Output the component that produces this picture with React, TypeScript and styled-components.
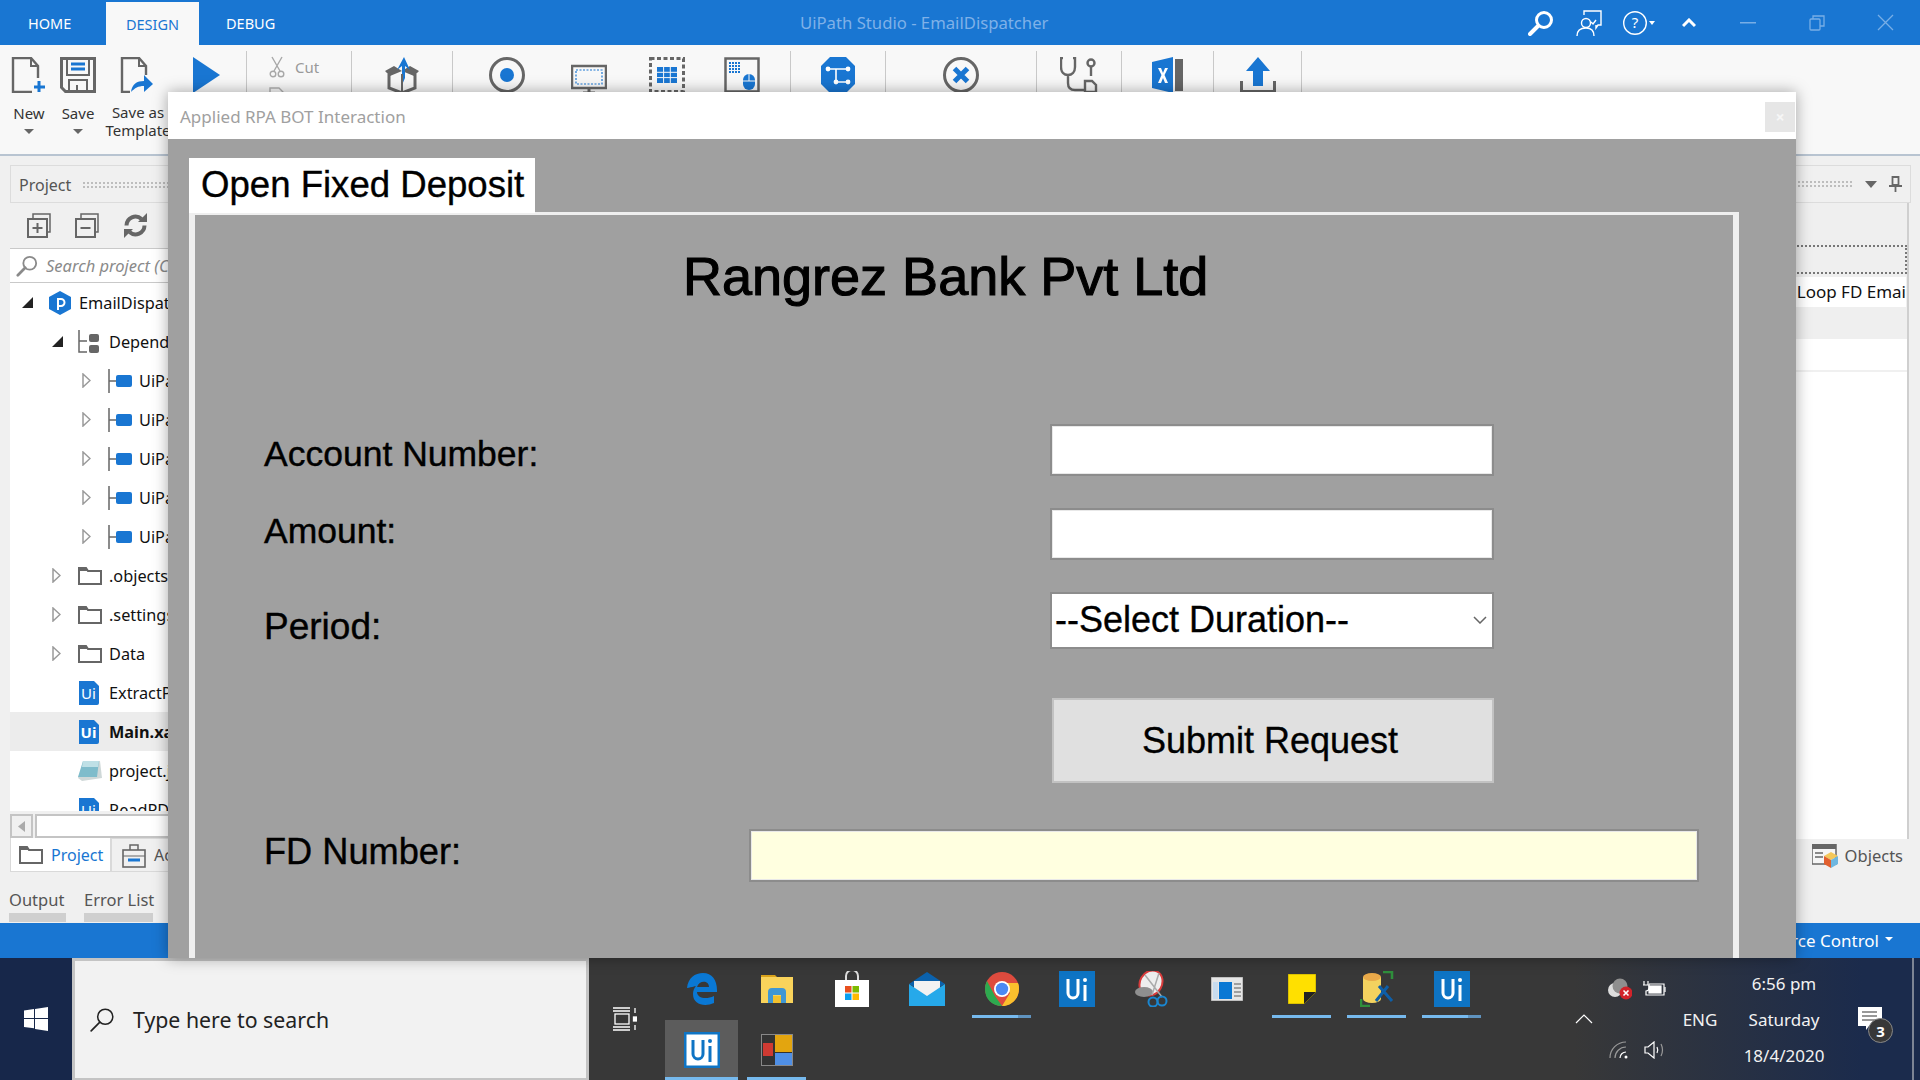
import React from 'react'
import styled, {createGlobalStyle} from 'styled-components'

const BLUE = '#1976d2'
const GREY = '#666666'
const UI_FONT = '"Noto Sans", "Open Sans", sans-serif'

const GlobalStyle = createGlobalStyle`
  html, body { margin: 0; padding: 0; background: #f0f0f0; }
  body { font-family: ${UI_FONT}; overflow: hidden; }
  * { box-sizing: border-box; }
  svg { flex: none; }
`

const Screen = styled.div`
  position: relative;
  width: 1920px;
  height: 1080px;
  overflow: hidden;
  display: flex;
  flex-direction: column;
  background: #f0f0f0;
`

/* ---------- title bar ---------- */
const TopBar = styled.div`
  height: 45px;
  background: ${BLUE};
  display: flex;
  align-items: flex-end;
  position: relative;
`
const MenuTab = styled.div<{$active?: boolean}>`
  height: ${p => (p.$active ? '43px' : '45px')};
  width: ${p => (p.$active ? '93px' : '106px')};
  margin-right: ${p => (p.$active ? '3px' : '0')};
  padding-left: ${p => (p.$active ? '0' : '28px')};
  display: flex;
  align-items: center;
  justify-content: ${p => (p.$active ? 'center' : 'flex-start')};
  font-size: 14.5px;
  color: ${p => (p.$active ? BLUE : '#fff')};
  background: ${p => (p.$active ? '#f8f8f8' : 'transparent')};
`
const DebugTab = styled(MenuTab)`
  padding-left: 24px;
`
const AppTitle = styled.div`
  width: 249px;
  margin-left: 492px;
  height: 45px;
  line-height: 45px;
  font-size: 16.7px;
  white-space: nowrap;
  color: #7fb1e8;
`
const TopIcons = styled.div`
  margin-left: auto;
  height: 45px;
  display: flex;
  align-items: center;
`
const TopIcon = styled.div<{$w: number}>`
  width: ${p => p.$w}px;
  display: flex;
  justify-content: center;
`

/* ---------- ribbon ---------- */
const Ribbon = styled.div`
  height: 111px;
  background: #f8f8f8;
  border-bottom: 2px solid #b8c4d1;
  display: flex;
  padding-top: 6px;
  overflow: hidden;
`
const RibbonButton = styled.div<{$w: number; $pad?: number}>`
  width: ${p => p.$w}px;
  padding-left: ${p => p.$pad ?? 0}px;
  padding-top: 6px;
  display: flex;
  flex-direction: column;
  align-items: ${p => (p.$pad !== undefined ? 'flex-start' : 'center')};
  flex: none;
`
const RibbonLabel = styled.div<{$top?: number}>`
  margin-top: ${p => p.$top ?? 11}px;
  font-size: 15px;
  line-height: 18px;
  color: #333;
  text-align: center;
  white-space: nowrap;
`
const Caret = styled.div`
  margin-top: 7px;
  width: 0;
  height: 0;
  border-left: 5px solid transparent;
  border-right: 5px solid transparent;
  border-top: 5px solid ${GREY};
`
const RibbonSep = styled.div`
  width: 1px;
  height: 100px;
  background: #c9c9c9;
  flex: none;
`
const CutRow = styled.div`
  display: flex;
  align-items: center;
  gap: 10px;
  font-size: 15px;
  color: #9a9a9a;
  margin-top: -1px;
`
const PasteStub = styled.div`
  margin-top: 9px;
  display: flex;
`

/* ---------- workspace ---------- */
const Workspace = styled.div`
  flex: 1;
  display: flex;
  padding-top: 9px;
  min-height: 0;
`
const LeftDock = styled.div`
  width: 200px;
  margin-left: 10px;
  flex: none;
  display: flex;
  flex-direction: column;
`
const DockHeader = styled.div`
  height: 38px;
  border: 1px solid #dcdcdc;
  border-right: 0;
  display: flex;
  align-items: center;
  padding: 2px 0 0 8px;
  gap: 11px;
  font-size: 16px;
  color: #555;
`
const Grip = styled.div<{$w: number}>`
  width: ${p => p.$w}px;
  height: 8px;
  background-image: radial-gradient(#bdbdbd 1px, transparent 1.2px);
  background-size: 4px 4px;
`
const DockTools = styled.div`
  height: 46px;
  display: flex;
  align-items: center;
  gap: 24px;
  padding-left: 17px;
  border-bottom: 1px solid #c9c9c9;
`
const SearchRow = styled.div`
  height: 34px;
  background: #fff;
  border-bottom: 1px solid #c9c9c9;
  display: flex;
  align-items: center;
  padding-left: 6px;
  gap: 8px;
  font-size: 16.5px;
  font-style: italic;
  color: #8a8a8a;
  white-space: nowrap;
  overflow: hidden;
`
const Tree = styled.div`
  height: 528px;
  background: #fff;
  overflow: hidden;
`
const TreeRow = styled.div<{$level: number; $selected?: boolean}>`
  height: 39px;
  display: flex;
  align-items: center;
  padding-left: ${p => 12 + p.$level * 30}px;
  background: ${p => (p.$selected ? '#ececec' : 'transparent')};
  font-size: 16.3px;
  font-weight: ${p => (p.$selected ? 700 : 400)};
  color: #111;
  white-space: nowrap;
`
const Expander = styled.div`
  width: 26px;
  flex: none;
  display: flex;
  justify-content: flex-start;
  padding-left: 0;
`
const TreeIcon = styled.div`
  width: 31px;
  flex: none;
  display: flex;
`
const HScroll = styled.div`
  height: 24px;
  margin-top: 3px;
  display: flex;
  gap: 2px;
`
const ScrollBtn = styled.div`
  width: 23px;
  border: 2px solid #c4c4c4;
  background: #f0f0f0;
  display: flex;
  align-items: center;
  justify-content: center;
`
const ScrollTrack = styled.div`
  flex: 1;
  border: 2px solid #c4c4c4;
  background: #fff;
`
const DockTabs = styled.div`
  height: 34px;
  display: flex;
  font-size: 16px;
`
const DockTab = styled.div<{$active?: boolean}>`
  display: flex;
  align-items: center;
  gap: 8px;
  flex: none;
  padding-left: ${p => (p.$active ? '8px' : '10px')};
  width: ${p => (p.$active ? '101px' : '99px')};
  background: ${p => (p.$active ? '#fff' : 'transparent')};
  border: 1px solid #d9d9d9;
  border-top: ${p => (p.$active ? '0' : '1px solid #d9d9d9')};
  color: ${p => (p.$active ? BLUE : '#555')};
  white-space: nowrap;
`
const OutputTabs = styled.div`
  margin-top: 14px;
  margin-left: -1px;
  display: flex;
  gap: 18px;
`
const OutputTab = styled.div<{$w: number}>`
  width: ${p => p.$w}px;
  font-size: 16.5px;
  line-height: 27px;
  color: #555;
  white-space: nowrap;
  border-bottom: 9px solid #cfcfcf;
`
const RightDock = styled.div`
  margin-left: auto;
  width: 190px;
  padding-right: 11px;
  display: flex;
  flex-direction: column;
  flex: none;
`
const RightHeader = styled.div`
  height: 38px;
  border: 1px solid #dcdcdc;
  border-left: 0;
  margin-right: -2px;
  display: flex;
  align-items: center;
  justify-content: flex-end;
  padding-right: 8px;
  gap: 12px;
`
const RightBody = styled.div`
  border-right: 2px solid #cfcfcf;
  height: 636px;
  display: flex;
  flex-direction: column;
  background: #efefef;
  padding-top: 42px;
`
const DottedBox = styled.div`
  height: 29px;
  border: 2px dotted #777;
  border-left: 0;
`
const LoopRow = styled.div`
  margin-top: 3px;
  height: 30px;
  margin-right: 1px;
  background: #fff;
  text-align: right;
  line-height: 30px;
  font-size: 17px;
  color: #111;
  white-space: nowrap;
  overflow: hidden;
`
const WhiteArea = styled.div`
  margin-top: 32px;
  flex: 1;
  background: #fff;
`
const WhiteRule = styled.div`
  height: 33px;
  border-bottom: 2px solid #f0f0f0;
`
const ObjectsTab = styled.div`
  height: 33px;
  display: flex;
  align-items: center;
  justify-content: flex-end;
  gap: 7px;
  font-size: 16.5px;
  color: #555;
  padding-right: 6px;
`
const StatusBar = styled.div`
  height: 35px;
  background: ${BLUE};
  color: #fff;
  font-size: 17px;
  display: flex;
  align-items: center;
  justify-content: flex-end;
  padding-right: 27px;
  gap: 6px;
  flex: none;
`
const SmallCaret = styled.div`
  width: 0;
  height: 0;
  border-left: 4px solid transparent;
  border-right: 4px solid transparent;
  border-top: 4px solid #fff;
  margin-bottom: 3px;
`

/* ---------- dialog ---------- */
const Dialog = styled.div`
  position: absolute;
  left: 168px;
  top: 92px;
  width: 1628px;
  height: 866px;
  display: flex;
  flex-direction: column;
  background: #a0a0a0;
  box-shadow: 0 0 14px rgba(0, 0, 0, 0.35);
  overflow: hidden;
`
const DialogTitle = styled.div`
  height: 47px;
  background: #fff;
  display: flex;
  align-items: center;
  justify-content: space-between;
  padding: 2px 0 0 12px;
  font-size: 17px;
  color: #a0a0a0;
`
const CloseX = styled.div`
  width: 30px;
  height: 30px;
  margin: 1px 1px 0 0;
  background: #e6e6e6;
  color: #f6f6f6;
  font-size: 16px;
  font-weight: 700;
  display: flex;
  align-items: center;
  justify-content: center;
`
const FormWrap = styled.div`
  flex: 1;
  padding: 19px 57px 0 21px;
  display: flex;
  flex-direction: column;
  font-family: "Liberation Sans", Arial, sans-serif;
  color: #000;
`
const FormTab = styled.div`
  width: 346px;
  height: 55px;
  background: #fff;
  padding-left: 12px;
  font-size: 36.6px;
  line-height: 53px;
  margin-bottom: -1px;
  position: relative;
  z-index: 1;
  white-space: nowrap;
  -webkit-text-stroke: 0.35px #000;
`
const FormFrame = styled.div`
  flex: 1;
  border: 6px solid #efefef;
  border-top-width: 3px;
  border-bottom: 0;
  background: #a0a0a0;
`
const Heading = styled.h1`
  margin: 12px 0 0;
  padding-left: 488px;
  height: 100px;
  font-size: 54px;
  line-height: 98px;
  font-weight: 400;
  -webkit-text-stroke: 1.1px #000;
  white-space: nowrap;
`
const Form = styled.form`
  margin-top: 97px;
  padding-left: 69px;
  display: flex;
  flex-direction: column;
`
const FieldRow = styled.div<{$top: number; $h: number; $labelCol?: number}>`
  margin-top: ${p => p.$top}px;
  height: ${p => p.$h}px;
  display: grid;
  grid-template-columns: ${p => p.$labelCol ?? 786}px 1fr;
`
const FieldLabel = styled.label<{$top: number; $size?: number}>`
  margin-top: ${p => p.$top}px;
  font-size: ${p => p.$size ?? 35.5}px;
  line-height: 44px;
  white-space: nowrap;
  -webkit-text-stroke: 0.4px #000;
`
const TextField = styled.input<{$w?: number; $bg?: string}>`
  display: block;
  width: ${p => p.$w ?? 444}px;
  height: 100%;
  padding: 0 4px;
  background: ${p => p.$bg ?? '#fff'};
  border: 2px solid #8c8c8c;
  outline: 1px solid #e8e8e8;
  outline-offset: -3px;
  border-radius: 0;
`
const SelectWrap = styled.div`
  position: relative;
  width: 444px;
  height: 100%;
`
const DurationSelect = styled.select`
  width: 100%;
  height: 100%;
  padding: 0 0 3px 3px;
  appearance: none;
  border: 2px solid #8c8c8c;
  border-radius: 0;
  background: #fff;
  color: #000;
  font-family: "Liberation Sans", Arial, sans-serif;
  font-size: 36px;
  -webkit-text-stroke: 0.35px #000;
`
const SelectChevron = styled.svg`
  position: absolute;
  right: 7px;
  top: 24px;
`
const SubmitButton = styled.button`
  display: block;
  width: 442px;
  height: 100%;
  margin-left: 2px;
  background: #e0e0e0;
  border: 2px solid #c2c2c2;
  color: #000;
  font-family: "Liberation Sans", Arial, sans-serif;
  font-size: 36px;
  padding: 0 6px 0 0;
  -webkit-text-stroke: 0.35px #000;
`

/* ---------- taskbar ---------- */
const Taskbar = styled.div`
  height: 122px;
  flex: none;
  display: flex;
  background: linear-gradient(90deg, #383838 0%, #383838 82%, #1b2b4c 97%);
`
const StartButton = styled.div`
  width: 72px;
  background: #17274a;
  display: flex;
  align-items: center;
  justify-content: center;
  flex: none;
`
const SearchBox = styled.div`
  width: 517px;
  flex: none;
  background: #f2f2f2;
  border: 3px solid #c4c4c4;
  border-bottom-width: 2px;
  display: flex;
  align-items: center;
  padding-left: 14px;
  gap: 18px;
  font-size: 21.3px;
  color: #222;
`
const TaskView = styled.div`
  width: 75px;
  flex: none;
  padding-right: 4px;
  display: flex;
  align-items: center;
  justify-content: center;
`
const TaskGrid = styled.div`
  width: 825px;
  flex: none;
  display: grid;
  grid-template-columns: repeat(11, 75px);
  grid-template-rows: 62px 60px;
`
const TaskItem = styled.div<{$active?: boolean}>`
  position: relative;
  display: flex;
  align-items: center;
  justify-content: center;
  background: ${p => (p.$active ? '#5c5c5c' : 'transparent')};
  margin: 0 1px;
  height: 100%;
`
const RunningBar = styled.div<{$split?: boolean; $bottom: number}>`
  position: absolute;
  left: 7px;
  right: 7px;
  bottom: ${p => p.$bottom}px;
  height: 3px;
  background: ${p =>
    p.$split
      ? 'linear-gradient(90deg, #76b9ed 0 78%, #5f93bf 78% 100%)'
      : '#76b9ed'};
`
const ActiveBar = styled(RunningBar)`
  left: 0;
  right: 0;
`
const Tray = styled.div`
  flex: 1;
  display: flex;
  color: #fff;
  position: relative;
`
const TrayChevron = styled.div`
  width: 29px;
  margin-left: 86px;
  display: flex;
  align-items: center;
  justify-content: flex-start;
`
const TrayIcons = styled.div`
  width: 66px;
  display: grid;
  grid-template-columns: 30px 30px;
  grid-template-rows: 61px 61px;
  place-items: center;
  gap: 0 6px;
`
const TrayLang = styled.div`
  width: 60px;
  font-size: 17px;
  display: flex;
  align-items: center;
  justify-content: center;
  color: #f2f2f2;
`
const Clock = styled.div`
  width: 108px;
  padding: 9px 0 7px;
  display: flex;
  flex-direction: column;
  justify-content: space-between;
  align-items: center;
  font-size: 17px;
  line-height: 34px;
  white-space: nowrap;
  color: #f2f2f2;
`
const Notify = styled.div`
  width: 40px;
  margin-left: 12px;
  display: flex;
  align-items: center;
  justify-content: center;
  position: relative;
`
const Badge = styled.div`
  position: absolute;
  left: 18px;
  top: 60px;
  width: 25px;
  height: 25px;
  border-radius: 50%;
  border: 1px solid #888;
  background: #383838;
  color: #fff;
  font-size: 15px;
  font-weight: 700;
  display: flex;
  align-items: center;
  justify-content: center;
`
const ShowDesktop = styled.div`
  position: absolute;
  right: 6px;
  top: 0;
  bottom: 0;
  width: 2px;
  background: #7d8594;
`

/* ---------- icons ---------- */
const NewIcon = () => (
  <svg width="36" height="36" viewBox="0 0 36 36" fill="none">
    <path d="M27 21V9l-7-8H2v34h19" stroke={GREY} strokeWidth="2.4" />
    <path d="M20 1v8h7" stroke={GREY} strokeWidth="2" />
    <path d="M28 24v11M23 30h11" stroke={BLUE} strokeWidth="3" />
  </svg>
)
const SaveIcon = () => (
  <svg width="36" height="36" viewBox="0 0 36 36" fill="none">
    <path d="M1.500 1.500h33v33h-29l-4-4z" stroke={GREY} strokeWidth="3" />
    <path d="M7 2v16h22V2" stroke={GREY} strokeWidth="2" />
    <path d="M11 7h14M11 12h14" stroke={BLUE} strokeWidth="3" />
    <path d="M9 35V23h18v12M17 35v-7" stroke={GREY} strokeWidth="2" />
  </svg>
)
const SaveAsIcon = () => (
  <svg width="36" height="36" viewBox="0 0 36 36" fill="none">
    <path d="M10 35H2V1h17l7 8v9" stroke={GREY} strokeWidth="2.400" />
    <path d="M19 1v8h7" stroke={GREY} strokeWidth="2" />
    <path d="M11 35c1-8 6-11 13-11v-6l9 9-9 8v-6c-6 0-9 2-13 6z" fill={BLUE} />
  </svg>
)
const PlayIcon = () => (
  <svg width="28" height="36" viewBox="0 0 28 36"><path d="M0 0l27 18L0 36z" fill={BLUE} /></svg>
)
const ScissorsIcon = () => (
  <svg width="16" height="22" viewBox="0 0 16 22" fill="none" stroke="#a8a8a8" strokeWidth="1.400">
    <path d="M3 1l8 14M13 1L5 15" />
    <circle cx="4" cy="18" r="2.800" />
    <circle cx="12" cy="18" r="2.800" />
  </svg>
)
const PasteIcon = () => (
  <svg width="16" height="10" viewBox="0 0 16 10" fill="none" stroke="#b0b0b0" strokeWidth="1.400">
    <path d="M1 10V1h9l4 4v5" />
  </svg>
)
const PublishBoxIcon = () => (
  <svg width="36" height="36" viewBox="0 0 36 36" fill="none">
    <path d="M5 17v14l13 5 13-5V17" stroke={GREY} strokeWidth="3" />
    <path d="M1 14l9-5 8 5 8-5 9 5-5 5-12-5-12 5z" fill={GREY} />
    <path d="M18 28V9l-5 4 7-13 6 13-5-4v12z" fill={BLUE} />
    <path d="M18 17v19" stroke={GREY} strokeWidth="2" />
  </svg>
)
const RecordIcon = () => (
  <svg width="36" height="36" viewBox="0 0 36 36" fill="none">
    <circle cx="18" cy="18" r="16.500" stroke={GREY} strokeWidth="3" />
    <circle cx="18" cy="18" r="7" fill={BLUE} />
  </svg>
)
const ScreenIcon = () => (
  <svg width="36" height="36" viewBox="0 0 36 36" fill="none">
    <rect x="1" y="9" width="34" height="22" stroke={GREY} strokeWidth="2.500" />
    <rect x="5" y="13" width="26" height="14" stroke={BLUE} strokeWidth="1.200" strokeDasharray="2 1.500" />
    <path d="M18 31v4M12 36h12" stroke={GREY} strokeWidth="3" />
  </svg>
)
const TableIcon = () => (
  <svg width="36" height="36" viewBox="0 0 36 36" fill="none">
    <rect x="1.500" y="1.500" width="33" height="33" stroke={GREY} strokeWidth="3" strokeDasharray="4 2.500" />
    <rect x="8" y="10" width="20" height="16" fill={BLUE} />
    <path d="M8 15.300h20M8 20.600h20M14.600 10v16M21.300 10v16" stroke="#f8f8f8" strokeWidth="1" />
  </svg>
)
const MouseGridIcon = () => (
  <svg width="36" height="36" viewBox="0 0 36 36" fill="none">
    <rect x="1.500" y="1.500" width="33" height="33" stroke={GREY} strokeWidth="2.500" />
    <path d="M5 6h12M5 9h12M5 12h12M5 15h12" stroke={BLUE} strokeWidth="2" strokeDasharray="2 1" />
    <rect x="19" y="17" width="12" height="16" rx="6" fill={BLUE} />
    <path d="M19 24h12M25 17v7" stroke="#f8f8f8" strokeWidth="1" />
  </svg>
)
const HexFlowIcon = () => (
  <svg width="34" height="36" viewBox="0 0 34 36" fill="none">
    <path d="M9 0h16l9 9v18l-9 9H9l-9-9V9z" fill={BLUE} />
    <path d="M7 12h20M15 12v13h12" stroke="#fff" strokeWidth="1.600" />
    <circle cx="7" cy="12" r="2.400" fill="#fff" /><circle cx="27" cy="12" r="2.400" fill="#fff" />
    <circle cx="15" cy="25" r="2.400" fill="#fff" /><circle cx="27" cy="25" r="2.400" fill="#fff" />
  </svg>
)
const StopIcon = () => (
  <svg width="36" height="36" viewBox="0 0 36 36" fill="none">
    <circle cx="18" cy="18" r="16.500" stroke={GREY} strokeWidth="3" />
    <path d="M11.500 11.500l13 13M24.500 11.500l-13 13" stroke={BLUE} strokeWidth="5" />
  </svg>
)
const StethoscopeIcon = () => (
  <svg width="38" height="36" viewBox="0 0 38 36" fill="none" stroke={GREY} strokeWidth="2.400">
    <path d="M3 1H1v9c0 5 3 8 7 8s7-3 7-8V1h-2M8 18v8c0 5 3 7 7 7h9" />
    <circle cx="31" cy="6" r="3.500" />
    <path d="M31 10v9" />
    <path d="M25 35V24h7l4 4v7z" />
  </svg>
)
const ExcelIcon = () => (
  <svg width="32" height="36" viewBox="0 0 32 36">
    <path d="M0 5l21-5v36L0 31z" fill={BLUE} />
    <rect x="23" y="2" width="8" height="32" fill={GREY} />
    <path d="M6 11h3l2 5 2-5h3l-3.500 7 3.500 8h-3l-2-5-2 5H6l3.500-8z" fill="#fff" />
  </svg>
)
const UploadIcon = () => (
  <svg width="36" height="36" viewBox="0 0 36 36" fill="none">
    <path d="M18 0l12 14h-7v15H13V14H6z" fill={BLUE} />
    <path d="M1.500 24v10.500h33V24" stroke={GREY} strokeWidth="3" />
  </svg>
)
const MagnifierIcon = () => (
  <svg width="26" height="26" viewBox="0 0 26 26" fill="none" stroke="#fff">
    <circle cx="16" cy="10" r="7.500" strokeWidth="3" />
    <path d="M10 16l-8 8" strokeWidth="4" strokeLinecap="round" />
  </svg>
)
const FeedbackIcon = () => (
  <svg width="26" height="26" viewBox="0 0 26 26" fill="none" stroke="#fff" strokeWidth="1.400">
    <path d="M8 5V1h17v14h-3l-2 3v-3" />
    <circle cx="10" cy="13" r="4.500" />
    <path d="M1 26c0-6 4-8 9-8s8 2 8 8M15 12l2 2 3-4" />
  </svg>
)
const HelpIcon = () => (
  <svg width="32" height="26" viewBox="0 0 32 26" fill="none">
    <circle cx="12" cy="13" r="11.300" stroke="#fff" strokeWidth="1.400" />
    <text x="12" y="18" textAnchor="middle" fill="#fff" fontSize="15" fontFamily="Noto Sans, sans-serif">?</text>
    <path d="M26 11h6l-3 4z" fill="#fff" />
  </svg>
)
const ChevronUpIcon = () => (
  <svg width="14" height="10" viewBox="0 0 14 10" fill="none" stroke="#fff" strokeWidth="3"><path d="M1 8l6-6 6 6" /></svg>
)
const MinimizeIcon = () => (
  <svg width="16" height="4" viewBox="0 0 16 4"><rect y="1" width="16" height="1.500" fill="#78aee6" /></svg>
)
const RestoreIcon = () => (
  <svg width="16" height="16" viewBox="0 0 16 16" fill="none" stroke="#78aee6" strokeWidth="1.300">
    <rect x="1" y="4" width="10" height="11" rx="1" />
    <path d="M4 4V1h11v10h-4" />
  </svg>
)
const CloseIcon = () => (
  <svg width="17" height="17" viewBox="0 0 17 17" fill="none" stroke="#78aee6" strokeWidth="1.300"><path d="M1 1l15 15M16 1L1 16" /></svg>
)
const ExpandAllIcon = () => (
  <svg width="24" height="25" viewBox="0 0 24 25" fill="none" stroke={GREY} strokeWidth="2">
    <path d="M6 5V1h17v18h-3" strokeWidth="1.500" />
    <rect x="1" y="6" width="19" height="18" />
    <path d="M10.500 10v10M5.500 15h10" />
  </svg>
)
const CollapseAllIcon = () => (
  <svg width="24" height="25" viewBox="0 0 24 25" fill="none" stroke={GREY} strokeWidth="2">
    <path d="M6 5V1h17v18h-3" strokeWidth="1.500" />
    <rect x="1" y="6" width="19" height="18" />
    <path d="M5.500 15h10" />
  </svg>
)
const RefreshIcon = () => (
  <svg width="25" height="25" viewBox="0 0 25 25" fill="none" stroke={GREY} strokeWidth="4">
    <path d="M3.500 12.500a9 9 0 0 1 15-6.500M21.500 12.500a9 9 0 0 1-15 6.500" />
    <path d="M15 9h9V0z" fill={GREY} stroke="none" />
    <path d="M10 16H1v9z" fill={GREY} stroke="none" />
  </svg>
)
const SearchGlass = ({color, size, line = 2, handle = 3}: {color: string; size: number; line?: number; handle?: number}) => (
  <svg width={size} height={size} viewBox="0 0 24 24" fill="none" stroke={color}>
    <circle cx="15" cy="9" r="7" strokeWidth={line} />
    <path d="M10 14l-8 8" strokeWidth={handle} strokeLinecap="round" />
  </svg>
)
const TriangleDown = () => (
  <svg width="11" height="11" viewBox="0 0 11 11"><path d="M0 11L11 0v11z" fill="#222" /></svg>
)
const TriangleRight = () => (
  <svg width="9" height="15" viewBox="0 0 9 15" fill="none"><path d="M1 1l7 6.500L1 14z" stroke="#9a9a9a" strokeWidth="1.500" /></svg>
)
const ProjectHexIcon = () => (
  <svg width="24" height="24" viewBox="0 0 24 24">
    <path d="M12 0l11 6v12l-11 6-11-6V6z" fill={BLUE} />
    <path d="M10 19V8h3a3.500 3.500 0 0 1 0 7h-3" fill="none" stroke="#fff" strokeWidth="2" />
  </svg>
)
const DepsIcon = () => (
  <svg width="22" height="24" viewBox="0 0 22 24" fill="none">
    <path d="M1 0v22h8M1 11h8" stroke={GREY} strokeWidth="1.500" />
    <rect x="11" y="4" width="10" height="8" rx="2" fill={GREY} />
    <rect x="11" y="15" width="10" height="8" rx="2" fill={GREY} />
  </svg>
)
const PackageIcon = () => (
  <svg width="24" height="24" viewBox="0 0 24 24" fill="none">
    <path d="M1 0v24M1 12h7" stroke={GREY} strokeWidth="1.500" />
    <rect x="8" y="6" width="16" height="12" rx="2" fill={BLUE} />
  </svg>
)
const FolderIcon = ({size = 24}: {size?: number}) => (
  <svg width={size} height={size * 0.75} viewBox="0 0 24 18" fill="none">
    <path d="M1 17V1h7l2 3h13v13z" stroke={GREY} strokeWidth="2" />
    <path d="M1 1h7l2 3H1z" fill={GREY} />
  </svg>
)
const UiFileIcon = () => (
  <svg width="21" height="24" viewBox="0 0 21 24">
    <path d="M1 0h15l5 5v17a2 2 0 0 1-2 2H1z" fill={BLUE} />
    <text x="10.500" y="18" textAnchor="middle" fill="#fff" fontSize="15" fontFamily="Noto Sans, sans-serif">Ui</text>
  </svg>
)
const JsonFileIcon = () => (
  <svg width="24" height="22" viewBox="0 0 24 22">
    <path d="M6 1h16l2 17-20 3-4-3z" fill="#cfd8d8" />
    <path d="M5 1h16l-2 16H0z" fill="#7fbccb" />
    <path d="M5 1h16l-1 6H4z" fill="#bfe0e6" />
  </svg>
)
const ToolboxIcon = () => (
  <svg width="24" height="25" viewBox="0 0 24 25" fill="none">
    <path d="M8 7V2h8v5" stroke={GREY} strokeWidth="1.500" />
    <rect x="1" y="7" width="22" height="17" stroke={GREY} strokeWidth="1.600" />
    <path d="M1 13h22" stroke={GREY} strokeWidth="1" />
    <path d="M6 17h12" stroke={BLUE} strokeWidth="3" />
  </svg>
)
const ObjectsIcon = () => (
  <svg width="26" height="24" viewBox="0 0 26 24">
    <rect x="0" y="0" width="24" height="20" fill="#f5f5f5" stroke={GREY} strokeWidth="1.500" />
    <rect x="0" y="0" width="24" height="5" fill={GREY} />
    <path d="M3 9h8M3 13h8" stroke={GREY} strokeWidth="1.500" />
    <path d="M19 8l7 4-7 4-7-4z" fill="#f4c85a" />
    <path d="M12 12l7 4v8l-7-4z" fill="#e2602f" />
    <path d="M26 12l-7 4v8l7-4z" fill="#6fb7e0" />
  </svg>
)
const PinIcon = () => (
  <svg width="13" height="16" viewBox="0 0 13 16" fill="none" stroke={GREY} strokeWidth="1.800">
    <path d="M3.500 1h6v8h-6zM0 10h13M6.500 10v6" />
  </svg>
)
const DropTriangle = () => (
  <svg width="12" height="7" viewBox="0 0 12 7"><path d="M0 0h12L6 7z" fill={GREY} /></svg>
)
const WindowsLogo = () => (
  <svg width="24" height="24" viewBox="0 0 24 24" fill="#fff">
    <path d="M0 3.500l10-1.400V11H0zM11 2l13-2v11H11zM0 12h10v9.200L0 20zM11 12h13v12l-13-1.900z" />
  </svg>
)
const TaskViewIcon = () => (
  <svg width="24" height="24" viewBox="0 0 24 24" fill="none" stroke="#fff" strokeWidth="1.300">
    <path d="M0 1h17M0 4h17M0 20h17M0 23h17M22 1v5M22 18v5" />
    <rect x="2" y="7" width="14" height="10" />
    <rect x="20.500" y="10" width="3" height="4" fill="#fff" />
  </svg>
)
const EdgeIcon = () => (
  <svg width="32" height="32" viewBox="0 0 32 32">
    <path d="M1 15C2 5 9 0 17 0c9 0 14 7 14 17v2H11c0 6 9 8 17 4v7c-9 4-21 2-21-9 0-3 1-6 3-8 0 0-4 1-9 2zm10-1h12c0-7-10-7-12 0z" fill="#0a78d4" />
  </svg>
)
const ExplorerIcon = () => (
  <svg width="32" height="30" viewBox="0 0 32 30">
    <path d="M0 1h14l3 3H0z" fill="#d9a21b" />
    <rect y="3" width="32" height="26" fill="#f9d35b" />
    <path d="M7 29V18a4 4 0 0 1 4-4h10a4 4 0 0 1 4 4v11h-5v-8h-8v8z" fill="#3f97d4" />
    <rect x="12" y="22" width="8" height="7" fill="#f2c12e" />
  </svg>
)
const StoreIcon = () => (
  <svg width="34" height="36" viewBox="0 0 34 36">
    <path d="M11 10V5a6 6 0 0 1 12 0v5" fill="none" stroke="#ddd" strokeWidth="2" />
    <rect y="9" width="34" height="27" fill="#fff" />
    <rect x="10" y="15" width="6.500" height="6.500" fill="#e8501f" />
    <rect x="17.500" y="15" width="6.500" height="6.500" fill="#7dba00" />
    <rect x="10" y="22.500" width="6.500" height="6.500" fill="#0a9ff0" />
    <rect x="17.500" y="22.500" width="6.500" height="6.500" fill="#ffb900" />
  </svg>
)
const MailIcon = () => (
  <svg width="36" height="34" viewBox="0 0 36 34">
    <path d="M18 0l18 12-18 10L0 12z" fill="#0b62ad" />
    <path d="M5 9h26v10l-13 7-13-7z" fill="#f2f2f2" />
    <path d="M0 12l18 12 18-12v22H0z" fill="#26a9ea" />
  </svg>
)
const ChromeIcon = () => (
  <svg width="34" height="34" viewBox="0 0 34 34">
    <circle cx="17" cy="17" r="17" fill="#dd4b3e" />
    <path d="M2 9l8 15 7 10C7 34 0 27 0 17c0-3 .7-5.700 2-8z" fill="#2da94f" />
    <path d="M17 11h16c1 2 1 4 1 6 0 10-8 17-17 17l8-13z" fill="#fbc02d" />
    <circle cx="17" cy="17" r="8" fill="#fff" />
    <circle cx="17" cy="17" r="6.200" fill="#4a89f3" />
  </svg>
)
const UiSquare = ({size = 36}: {size?: number}) => (
  <svg width={size} height={size} viewBox="0 0 36 36">
    <rect width="36" height="36" fill="#0e74c4" />
    <path d="M9 8v14a5 5 0 0 0 10 0V8M26 14v16" fill="none" stroke="#fff" strokeWidth="3" />
    <circle cx="26" cy="9" r="2" fill="#fff" />
  </svg>
)
const UiFramed = () => (
  <svg width="36" height="36" viewBox="0 0 36 36">
    <rect width="36" height="36" fill="#0e74c4" />
    <rect x="2.500" y="2.500" width="31" height="31" fill="#fff" />
    <path d="M9 8v14a5 5 0 0 0 10 0V8M26 14v16" fill="none" stroke="#0e74c4" strokeWidth="3" />
    <circle cx="26" cy="9" r="2" fill="#0e74c4" />
  </svg>
)
const SnipIcon = () => (
  <svg width="34" height="36" viewBox="0 0 34 36" fill="none">
    <ellipse cx="16" cy="12" rx="11" ry="13" transform="rotate(30 16 12)" fill="#eee" stroke="#d83b3b" strokeWidth="2" />
    <ellipse cx="9" cy="21" rx="9" ry="5" fill="#8f8f8f" />
    <path d="M10 4l17 22M24 2l-7 22" stroke="#aaa" strokeWidth="1.500" />
    <circle cx="27" cy="30" r="4.500" stroke="#1a86d0" strokeWidth="2" />
    <circle cx="18" cy="31" r="4.500" stroke="#1a86d0" strokeWidth="2" />
  </svg>
)
const PanelAppIcon = () => (
  <svg width="32" height="24" viewBox="0 0 32 24">
    <rect width="32" height="24" fill="#e6e6e6" stroke="#999" />
    <rect x="2" y="5" width="5" height="17" fill="#c9dcee" />
    <rect x="8" y="5" width="13" height="17" fill="#0a78d4" />
    <path d="M23 7h7M23 11h7M23 15h7M23 19h7" stroke="#888" strokeWidth="1.500" />
  </svg>
)
const StickyIcon = () => (
  <svg width="28" height="30" viewBox="0 0 28 30">
    <path d="M0 0h28v18L16 30H0z" fill="#ffe000" stroke="#b9a300" strokeWidth="1" />
    <path d="M16 30V18h12z" fill="#222" />
  </svg>
)
const DbToolIcon = () => (
  <svg width="34" height="36" viewBox="0 0 34 36" fill="none">
    <path d="M3 6v22a9 4 0 0 0 18 0V6" fill="#f3d25f" />
    <ellipse cx="12" cy="6" rx="9" ry="4" fill="#e9a949" />
    <path d="M23 1h9v7M1 28v7h9" stroke="#2f8f3c" strokeWidth="2.500" />
    <path d="M16 30l12-15M32 30L19 15" stroke="#0e5fa8" strokeWidth="3" />
  </svg>
)
const LayoutAppIcon = () => (
  <svg width="32" height="32" viewBox="0 0 32 32">
    <rect x="0.500" y="0.500" width="31" height="31" fill="#333" stroke="#888" />
    <rect x="14" y="1" width="17" height="17" fill="#e3a50f" />
    <rect x="14" y="19" width="17" height="12" fill="#4f8fe6" />
    <rect x="2" y="9" width="10" height="13" fill="#cf3a32" />
  </svg>
)
const CloudErrorIcon = () => (
  <svg width="26" height="22" viewBox="0 0 26 22">
    <circle cx="9" cy="12" r="7" fill="#ddd" />
    <circle cx="14" cy="8" r="7.500" fill="#8f8f8f" />
    <circle cx="20" cy="15" r="6.500" fill="#d2232a" />
    <path d="M17.500 12.500l5 5M22.500 12.500l-5 5" stroke="#fff" strokeWidth="1.600" />
  </svg>
)
const BatteryIcon = () => (
  <svg width="24" height="18" viewBox="0 0 24 18" fill="none" stroke="#fff" strokeWidth="1.200">
    <path d="M1 1v4M5 1v4M0 5h6v3a3 3 0 0 1-3 3v4h18v-11H6" />
    <rect x="6" y="6" width="12" height="7" fill="#fff" />
    <path d="M22 7v5" />
  </svg>
)
const TrayUpIcon = () => (
  <svg width="18" height="10" viewBox="0 0 18 10" fill="none" stroke="#fff" strokeWidth="1.200"><path d="M1 9l8-8 8 8" /></svg>
)
const WifiIcon = () => (
  <svg width="20" height="18" viewBox="0 0 20 18" fill="none" stroke="#9a9a9a" strokeWidth="1.200">
    <path d="M1 17A16 16 0 0 1 17 1M6 17A11 11 0 0 1 17 6" />
    <path d="M11 17a6 6 0 0 1 6-6" stroke="#fff" />
    <circle cx="17" cy="16" r="1.500" fill="#fff" stroke="none" />
  </svg>
)
const SpeakerIcon = () => (
  <svg width="22" height="18" viewBox="0 0 22 18" fill="none" stroke="#fff" strokeWidth="1.200">
    <path d="M1 6h3l6-5v16l-6-5H1z" />
    <path d="M13 6c1 2 1 4 0 6" />
    <path d="M17 3c2 4 2 8 0 12" stroke="#999" />
  </svg>
)
const NotifyIcon = () => (
  <svg width="24" height="24" viewBox="0 0 24 24">
    <path d="M0 0h24v19H11l-3 4v-4H0z" fill="#fff" />
    <path d="M4 5h15M4 9h15M4 13h15" stroke="#333" strokeWidth="1.200" />
  </svg>
)

const treeRows = [
  {level: 0, label: 'EmailDispatcher', open: true, icon: <ProjectHexIcon />},
  {level: 1, label: 'Dependencies', open: true, icon: <DepsIcon />},
  {level: 2, label: 'UiPath.Excel', closed: true, icon: <PackageIcon />},
  {level: 2, label: 'UiPath.Mail', closed: true, icon: <PackageIcon />},
  {level: 2, label: 'UiPath.PDF', closed: true, icon: <PackageIcon />},
  {level: 2, label: 'UiPath.System', closed: true, icon: <PackageIcon />},
  {level: 2, label: 'UiPath.UIAuto', closed: true, icon: <PackageIcon />},
  {level: 1, label: '.objects', closed: true, icon: <FolderIcon />},
  {level: 1, label: '.settings', closed: true, icon: <FolderIcon />},
  {level: 1, label: 'Data', closed: true, icon: <FolderIcon />},
  {level: 1, label: 'ExtractPDF.xaml', icon: <UiFileIcon />},
  {level: 1, label: 'Main.xaml', selected: true, icon: <UiFileIcon />},
  {level: 1, label: 'project.json', icon: <JsonFileIcon />},
  {level: 1, label: 'ReadPDF.xaml', icon: <UiFileIcon />},
]

const taskIcons: {icon: React.ReactNode; bar?: boolean; split?: boolean}[] = [
  {icon: <EdgeIcon />},
  {icon: <ExplorerIcon />},
  {icon: <StoreIcon />},
  {icon: <MailIcon />},
  {icon: <ChromeIcon />, bar: true, split: true},
  {icon: <UiSquare />},
  {icon: <SnipIcon />},
  {icon: <PanelAppIcon />},
  {icon: <StickyIcon />, bar: true},
  {icon: <DbToolIcon />, bar: true},
  {icon: <UiSquare />, bar: true, split: true},
]

function App() {
  return (
    <Screen>
      <GlobalStyle />
      <TopBar>
        <MenuTab>HOME</MenuTab>
        <MenuTab $active>DESIGN</MenuTab>
        <DebugTab>DEBUG</DebugTab>
        <AppTitle>UiPath Studio - EmailDispatcher</AppTitle>
        <TopIcons>
          <TopIcon $w={46}><MagnifierIcon /></TopIcon>
          <TopIcon $w={50}><FeedbackIcon /></TopIcon>
          <TopIcon $w={50}><HelpIcon /></TopIcon>
          <TopIcon $w={50}><ChevronUpIcon /></TopIcon>
          <TopIcon $w={68}><MinimizeIcon /></TopIcon>
          <TopIcon $w={69}><RestoreIcon /></TopIcon>
          <TopIcon $w={69}><CloseIcon /></TopIcon>
        </TopIcons>
      </TopBar>

      <Ribbon>
        <RibbonButton $w={58}>
          <NewIcon />
          <RibbonLabel>New</RibbonLabel>
          <Caret />
        </RibbonButton>
        <RibbonButton $w={40}>
          <SaveIcon />
          <RibbonLabel>Save</RibbonLabel>
          <Caret />
        </RibbonButton>
        <RibbonButton $w={80}>
          <SaveAsIcon />
          <RibbonLabel $top={10}>Save as<br />Template</RibbonLabel>
        </RibbonButton>
        <RibbonButton $w={68} $pad={15}><PlayIcon /></RibbonButton>
        <RibbonSep />
        <RibbonButton $w={104} $pad={22}>
          <CutRow><ScissorsIcon />Cut</CutRow>
          <PasteStub><PasteIcon /></PasteStub>
        </RibbonButton>
        <RibbonSep />
        <RibbonButton $w={100}><PublishBoxIcon /></RibbonButton>
        <RibbonSep />
        <RibbonButton $w={118} $pad={36}><RecordIcon /></RibbonButton>
        <RibbonButton $w={78} $pad={0}><ScreenIcon /></RibbonButton>
        <RibbonButton $w={75} $pad={0}><TableIcon /></RibbonButton>
        <RibbonButton $w={66} $pad={0}><MouseGridIcon /></RibbonButton>
        <RibbonSep />
        <RibbonButton $w={94}><HexFlowIcon /></RibbonButton>
        <RibbonSep />
        <RibbonButton $w={150}><StopIcon /></RibbonButton>
        <RibbonSep />
        <RibbonButton $w={84}><StethoscopeIcon /></RibbonButton>
        <RibbonSep />
        <RibbonButton $w={91}><ExcelIcon /></RibbonButton>
        <RibbonSep />
        <RibbonButton $w={87}><UploadIcon /></RibbonButton>
        <RibbonSep />
      </Ribbon>

      <Workspace>
        <LeftDock>
          <DockHeader>Project<Grip $w={100} /></DockHeader>
          <DockTools>
            <ExpandAllIcon />
            <CollapseAllIcon />
            <RefreshIcon />
          </DockTools>
          <SearchRow><SearchGlass color="#8a8a8a" size={22} />Search project (Ctrl+Alt+P)</SearchRow>
          <Tree>
            {treeRows.map(row => (
              <TreeRow key={row.label} $level={row.level} $selected={row.selected}>
                <Expander>
                  {row.open ? <TriangleDown /> : row.closed ? <TriangleRight /> : null}
                </Expander>
                <TreeIcon>{row.icon}</TreeIcon>
                {row.label}
              </TreeRow>
            ))}
          </Tree>
          <HScroll>
            <ScrollBtn>
              <svg width="7" height="11" viewBox="0 0 7 11"><path d="M7 0v11L0 5.500z" fill="#aaa" /></svg>
            </ScrollBtn>
            <ScrollTrack />
          </HScroll>
          <DockTabs>
            <DockTab $active><FolderIcon size={24} />Project</DockTab>
            <DockTab><ToolboxIcon />Activities</DockTab>
          </DockTabs>
          <OutputTabs>
            <OutputTab $w={57}>Output</OutputTab>
            <OutputTab $w={69}>Error List</OutputTab>
          </OutputTabs>
        </LeftDock>
        <RightDock>
          <RightHeader>
            <Grip $w={60} />
            <DropTriangle />
            <PinIcon />
          </RightHeader>
          <RightBody>
            <DottedBox />
            <LoopRow>Loop FD Emai</LoopRow>
            <WhiteArea><WhiteRule /></WhiteArea>
          </RightBody>
          <ObjectsTab><ObjectsIcon />Objects</ObjectsTab>
        </RightDock>
      </Workspace>
      <StatusBar>Source Control<SmallCaret /></StatusBar>

      <Taskbar>
        <StartButton><WindowsLogo /></StartButton>
        <SearchBox><SearchGlass color="#222" size={26} line={1.400} handle={1.600} />Type here to search</SearchBox>
        <TaskView><TaskViewIcon /></TaskView>
        <TaskGrid>
          {taskIcons.map((t, i) => (
            <TaskItem key={i}>
              {t.icon}
              {t.bar && <RunningBar $split={t.split} $bottom={2} />}
            </TaskItem>
          ))}
          <TaskItem $active>
            <UiFramed />
            <ActiveBar $bottom={0} />
          </TaskItem>
          <TaskItem>
            <LayoutAppIcon />
            <RunningBar $bottom={0} />
          </TaskItem>
        </TaskGrid>
        <Tray>
          <TrayChevron><TrayUpIcon /></TrayChevron>
          <TrayIcons>
            <CloudErrorIcon /><BatteryIcon />
            <WifiIcon /><SpeakerIcon />
          </TrayIcons>
          <TrayLang>ENG</TrayLang>
          <Clock>
            <div>6:56 pm</div>
            <div>Saturday</div>
            <div>18/4/2020</div>
          </Clock>
          <Notify>
            <NotifyIcon />
            <Badge>3</Badge>
          </Notify>
          <ShowDesktop />
        </Tray>
      </Taskbar>

      <Dialog>
        <DialogTitle>
          Applied RPA BOT Interaction
          <CloseX>×</CloseX>
        </DialogTitle>
        <FormWrap>
          <FormTab>Open Fixed Deposit</FormTab>
          <FormFrame>
            <Heading>Rangrez Bank Pvt Ltd</Heading>
            <Form onSubmit={e => e.preventDefault()}>
              <FieldRow $top={0} $h={52}>
                <FieldLabel $top={8}>Account Number:</FieldLabel>
                <TextField />
              </FieldRow>
              <FieldRow $top={32} $h={52}>
                <FieldLabel $top={1}>Amount:</FieldLabel>
                <TextField />
              </FieldRow>
              <FieldRow $top={32} $h={55}>
                <FieldLabel $top={13} $size={37}>Period:</FieldLabel>
                <SelectWrap>
                  <DurationSelect defaultValue="">
                    <option value="">--Select Duration--</option>
                  </DurationSelect>
                  <SelectChevron width="14" height="8" viewBox="0 0 14 8" fill="none" stroke="#666" strokeWidth="1.500">
                    <path d="M1 1l6 6 6-6" />
                  </SelectChevron>
                </SelectWrap>
              </FieldRow>
              <FieldRow $top={51} $h={85}>
                <span />
                <SubmitButton type="button">Submit Request</SubmitButton>
              </FieldRow>
              <FieldRow $top={46} $h={53} $labelCol={485}>
                <FieldLabel $top={1} $size={36.2}>FD Number:</FieldLabel>
                <TextField $w={950} $bg="#ffffe0" />
              </FieldRow>
            </Form>
          </FormFrame>
        </FormWrap>
      </Dialog>
    </Screen>
  )
}

export default App
